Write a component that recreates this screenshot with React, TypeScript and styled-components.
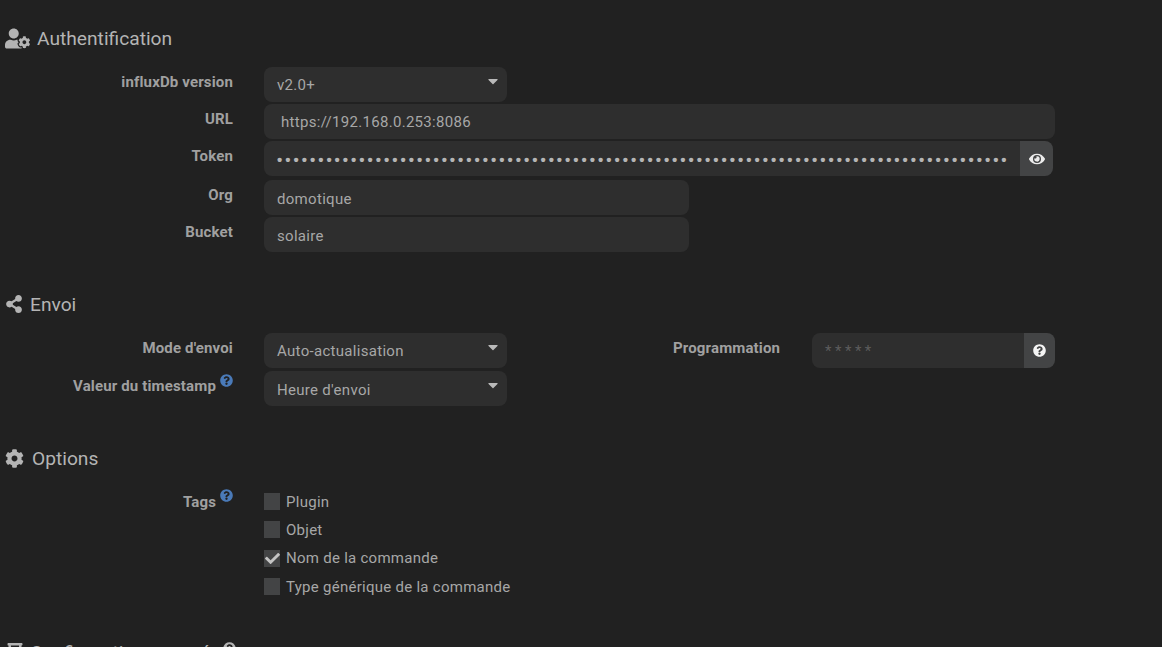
import React from 'react';
import styled, { createGlobalStyle } from 'styled-components';
import { FaCaretDown, FaCheck, FaCog, FaEye, FaQuestionCircle, FaShareAlt, FaUserCog, FaHourglassHalf } from 'react-icons/fa';

const GlobalStyle = createGlobalStyle`
  html, body {
    margin: 0;
    padding: 0;
    background-color: #212121;
    overflow: hidden;
  }
`;

const Page = styled.div`
  height: 647px;
  overflow: hidden;
  background-color: #212121;
  color: #a7a7a7;
  font-family: Roboto, "Liberation Sans", sans-serif;
  font-size: 15px;
  padding-top: 25px;
  box-sizing: border-box;
`;

const SectionTitle = styled.div<{ $gap: number; $after: number }>`
  display: flex;
  align-items: center;
  height: 26px;
  padding-left: 5px;
  gap: ${(p) => p.$gap}px;
  margin-bottom: ${(p) => p.$after}px;
  font-size: 19.2px;
  color: #b4b4b4;
  svg {
    color: #b4b4b4;
    flex-shrink: 0;
  }
`;

const Section = styled.section<{ $after: number }>`
  margin-bottom: ${(p) => p.$after}px;
`;

const Row = styled.div<{ $after?: number }>`
  display: grid;
  grid-template-columns: 233px 1fr;
  column-gap: 31px;
  margin-bottom: ${(p) => p.$after ?? 2}px;
`;

const Label = styled.div<{ $top?: number }>`
  display: flex;
  justify-content: flex-end;
  align-items: flex-start;
  padding-top: ${(p) => p.$top ?? 6}px;
  font-weight: 700;
  font-size: 15px;
  letter-spacing: 0.15px;
  line-height: 18px;
  color: #a0a0a0;
  white-space: nowrap;
`;

const Help = styled.span<{ $lift?: number }>`
  display: inline-flex;
  color: #4a7ab8;
  margin-left: 4px;
  margin-top: -${(p) => p.$lift ?? 3}px;
`;

const Field = styled.div<{ $width: number; $inset?: number; $drop?: number }>`
  display: flex;
  align-items: center;
  width: ${(p) => p.$width}px;
  height: 35px;
  box-sizing: border-box;
  padding-left: ${(p) => p.$inset ?? 13}px;
  padding-top: ${(p) => p.$drop ?? 0}px;
  background-color: #2e2e2e;
  border-radius: 8px;
  color: #a7a7a7;
  font-size: 15px;
  letter-spacing: 0.3px;
`;

const Select = styled(Field)`
  position: relative;
  width: 243px;
`;

const Caret = styled(FaCaretDown)`
  position: absolute;
  top: 6px;
  right: 6px;
  color: #b9b9b9;
`;

const Group = styled.div<{ $width: number }>`
  display: flex;
  width: ${(p) => p.$width}px;
  height: 35px;
  border-radius: 8px;
  overflow: hidden;
`;

const GroupInput = styled.div`
  flex: 1;
  min-width: 0;
  display: flex;
  align-items: center;
  padding-left: 13px;
  background-color: #2e2e2e;
  overflow: hidden;
`;

const Dots = styled.span`
  display: block;
  width: 732px;
  overflow: hidden;
  white-space: nowrap;
  color: #b5b5b5;
  font-family: "Liberation Sans", sans-serif;
  font-size: 15px;
  font-weight: 700;
  letter-spacing: 2.98px;
  line-height: 16px;
  position: relative;
  top: 1px;
`;

const Placeholder = styled.span`
  color: #5c5c5c;
  font-size: 15px;
  letter-spacing: 3.5px;
`;

const AddOn = styled.div<{ $width: number; $color: string }>`
  flex: 0 0 ${(p) => p.$width}px;
  display: flex;
  align-items: center;
  justify-content: center;
  background-color: #434445;
  color: ${(p) => p.$color};
`;

const SendRow = styled.div`
  display: flex;
`;

const InlineField = styled.div`
  display: flex;
  margin-left: 166px;
`;

const InlineLabel = styled(Label)`
  width: 108px;
  justify-content: flex-start;
  margin-right: 31px;
`;

const Checks = styled.div`
  display: flex;
  flex-direction: column;
`;

const Check = styled.label`
  display: flex;
  align-items: center;
  gap: 6px;
  height: 17px;
  margin-bottom: 11.4px;
  font-size: 15px;
  letter-spacing: 0.27px;
`;

const Box = styled.span`
  display: flex;
  align-items: center;
  justify-content: center;
  width: 16px;
  height: 17px;
  background-color: #434445;
  color: #c4c4c4;
`;

const LastHelp = styled(Help)`
  margin-left: -3px;
  margin-top: -8px;
`;

const options = [
  { name: 'Plugin', on: false },
  { name: 'Objet', on: false },
  { name: 'Nom de la commande', on: true },
  { name: 'Type générique de la commande', on: false },
];

export default function App() {
  return (
    <Page>
      <GlobalStyle />
      <Section $after={39}>
        <SectionTitle $gap={7} $after={16}>
          <FaUserCog size={25} />
          Authentification
        </SectionTitle>
        <Row>
          <Label>influxDb version</Label>
          <Select $width={243}>
            v2.0+
            <Caret size={16} />
          </Select>
        </Row>
        <Row>
          <Label>URL</Label>
          <Field $width={791} $inset={17}>https://192.168.0.253:8086</Field>
        </Row>
        <Row $after={4}>
          <Label>Token</Label>
          <Group $width={789}>
            <GroupInput>
              <Dots>{'•'.repeat(93)}</Dots>
            </GroupInput>
            <AddOn $width={33} $color="#ececec">
              <FaEye size={16} />
            </AddOn>
          </Group>
        </Row>
        <Row>
          <Label>Org</Label>
          <Field $width={425} $drop={2}>domotique</Field>
        </Row>
        <Row>
          <Label>Bucket</Label>
          <Field $width={425} $drop={2}>solaire</Field>
        </Row>
      </Section>

      <Section $after={39}>
        <SectionTitle $gap={7} $after={16}>
          <FaShareAlt size={18} />
          Envoi
        </SectionTitle>
        <Row $after={3}>
          <Label>Mode d'envoi</Label>
          <SendRow>
            <Select $width={243}>
              Auto-actualisation
              <Caret size={16} />
            </Select>
            <InlineField>
              <InlineLabel>Programmation</InlineLabel>
              <Group $width={243}>
                <GroupInput>
                  <Placeholder>*****</Placeholder>
                </GroupInput>
                <AddOn $width={31} $color="#f4f4f4">
                  <FaQuestionCircle size={13} />
                </AddOn>
              </Group>
            </InlineField>
          </SendRow>
        </Row>
        <Row>
          <Label>
            Valeur du timestamp
            <Help><FaQuestionCircle size={13} /></Help>
          </Label>
          <Select $width={243} $drop={2}>
            Heure d'envoi
            <Caret size={16} />
          </Select>
        </Row>
      </Section>

      <Section $after={33}>
        <SectionTitle $gap={8} $after={22}>
          <FaCog size={19} />
          Options
        </SectionTitle>
        <Row>
          <Label $top={0}>
            Tags
            <Help $lift={4}><FaQuestionCircle size={13} /></Help>
          </Label>
          <Checks>
            {options.map((o) => (
              <Check key={o.name}>
                <Box>{o.on && <FaCheck size={15} />}</Box>
                {o.name}
              </Check>
            ))}
          </Checks>
        </Row>
      </Section>

      <SectionTitle $gap={5} $after={0}>
        <FaHourglassHalf size={20} />
        Configuration avancée
        <LastHelp><FaQuestionCircle size={13} /></LastHelp>
      </SectionTitle>
    </Page>
  );
}
